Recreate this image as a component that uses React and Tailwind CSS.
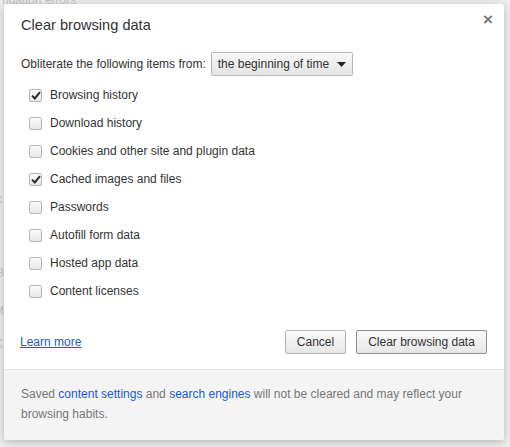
import React, { useState } from 'react';

const ITEMS = [
  { label: 'Browsing history', checked: true },
  { label: 'Download history', checked: false },
  { label: 'Cookies and other site and plugin data', checked: false },
  { label: 'Cached images and files', checked: true },
  { label: 'Passwords', checked: false },
  { label: 'Autofill form data', checked: false },
  { label: 'Hosted app data', checked: false },
  { label: 'Content licenses', checked: false },
];

function CheckBox({ checked, onChange }) {
  return (
    <button
      type="button"
      onClick={onChange}
      className="w-[13px] h-[13px] shrink-0 rounded-[2px] border border-[#b5b5b5] bg-gradient-to-b from-[#fafafa] to-[#e8e8e8] shadow-[inset_0_1px_0_#fff] flex items-center justify-center"
    >
      {checked && (
        <svg width="10" height="9" viewBox="0 0 10 9">
          <path d="M1 4.6 L3.8 7.4 L9 1.2" fill="none" stroke="#2a2a2a" strokeWidth="2" />
        </svg>
      )}
    </button>
  );
}

export default function App() {
  const [items, setItems] = useState(ITEMS);

  const toggle = (i) => {
    setItems(items.map((it, idx) => (idx === i ? { ...it, checked: !it.checked } : it)));
  };

  return (
    <div
      className="relative w-[510px] h-[447px] bg-[#efefef] overflow-hidden text-[12px] text-[#333]"
      style={{ fontFamily: '"Liberation Sans", Arial, sans-serif' }}
    >
      {/* page behind the dialog */}
      <div className="absolute left-[2px] top-[-9px] text-[#c4c4c4]">ngation errors</div>
      <div className="absolute left-[-4px] top-[64px] text-[#c8c8c8]">r</div>
      <div className="absolute left-[-4px] top-[190px] text-[#c8c8c8]">c</div>
      <div className="absolute left-[-4px] top-[264px] text-[#c8c8c8]">B</div>
      <div className="absolute left-[-6px] top-[302px] text-[#c8c8c8]">M</div>
      <div className="absolute left-[-5px] top-[335px] text-[#c8c8c8]">K</div>

      {/* dialog */}
      <div className="absolute left-[4px] top-[4px] w-[500px] h-[436px] bg-white rounded-[3px] shadow-[0_2px_10px_rgba(0,0,0,0.25)] flex flex-col overflow-hidden">
        <div className="flex justify-between items-start pl-[17px] pr-[11px] pt-[11px]">
          <h2 className="text-[14.6px] text-[#333] leading-[20px]">Clear browsing data</h2>
          <button className="text-[#777] text-[17px] leading-none font-bold mt-[-4px]">×</button>
        </div>

        <div className="flex items-center gap-[5px] pl-[17px] mt-[17px]">
          <span>Obliterate the following items from:</span>
          <button className="h-[24px] pl-[6px] pr-[6px] flex items-center gap-[8px] rounded-[2px] border border-[#b8b8b8] bg-gradient-to-b from-[#f8f8f8] to-[#e4e4e4] text-[#333]">
            the beginning of time
            <svg width="9" height="5" viewBox="0 0 9 5">
              <path d="M0 0 L9 0 L4.5 5 Z" fill="#222" />
            </svg>
          </button>
        </div>

        <div className="flex flex-col pl-[25px] mt-[5px]">
          {items.map((it, i) => (
            <label key={it.label} className="h-[28px] flex items-center gap-[8px]">
              <CheckBox checked={it.checked} onChange={() => toggle(i)} />
              <span>{it.label}</span>
            </label>
          ))}
        </div>

        <div className="flex items-center justify-between pl-[16px] pr-[17px] mt-auto mb-[15px]">
          <a href="#" className="text-[#1a5ac6] underline">Learn more</a>
          <div className="flex gap-[10px]">
            <button className="h-[24px] w-[61px] rounded-[2px] border border-[#b5b5b5] bg-gradient-to-b from-[#fafafa] to-[#e6e6e6] text-[#333]">
              Cancel
            </button>
            <button className="h-[24px] w-[131px] rounded-[2px] border border-[#8f8f8f] bg-gradient-to-b from-[#fafafa] to-[#e6e6e6] text-[#333]">
              Clear browsing data
            </button>
          </div>
        </div>

        <div className="h-[71px] border-t border-[#e4e4e4] bg-[#f4f4f4] px-[17px] pt-[14px] leading-[20px] text-[#777]">
          Saved <a href="#" className="text-[#1a5ac6]">content settings</a> and{' '}
          <a href="#" className="text-[#1a5ac6]">search engines</a> will not be cleared and may reflect your
          browsing habits.
        </div>
      </div>
    </div>
  );
}
